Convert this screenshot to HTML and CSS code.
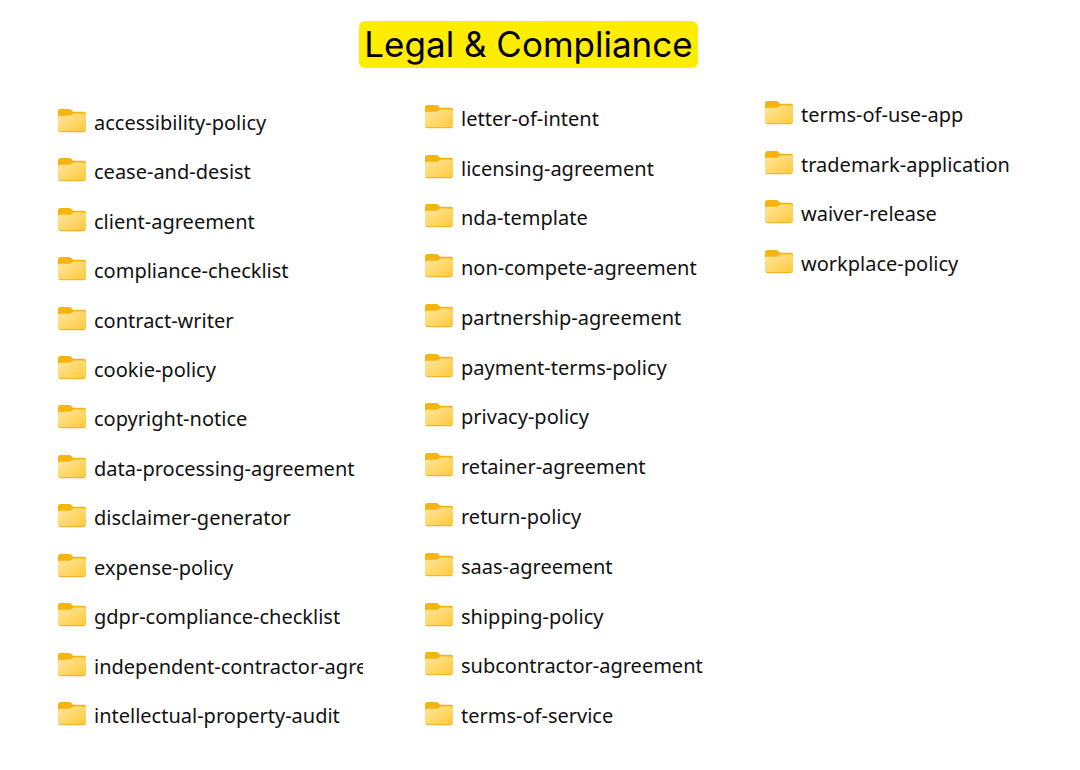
FILE: index.html
```html
<!DOCTYPE html>
<html lang="en">
<head>
<meta charset="utf-8">
<title>Legal &amp; Compliance</title>
<link rel="stylesheet" href="styles.css">
</head>
<body>
<svg class="defs" aria-hidden="true">
  <defs>
    <linearGradient id="front" x1="0" y1="0" x2="1" y2="1">
      <stop offset="0" stop-color="#ffe7a2"/>
      <stop offset="1" stop-color="#ffc937"/>
    </linearGradient>
    <symbol id="folder" viewBox="0 0 30 30">
      <path fill="#f6b40e" d="M1 3.500Q1 1 3.500 1H12Q13.500 1 14.500 2L16 3.800H27Q29 3.800 29 5.800V12H1Z"/>
      <path fill="url(#front)" d="M1 9.500Q1 7.800 3 7.800H12Q13.500 7.800 14.500 7L15.500 6Q16 5.500 17 5.500H27Q29 5.500 29 7.500V21.500Q29 24 26.500 24H3.500Q1 24 1 21.500Z"/>
      <path fill="#e9ae2e" d="M1.500 22.500Q2 24.200 4 24.200H26Q28 24.200 28.500 22.500Q27.500 23.200 26 23.200H4Q2.500 23.200 1.500 22.500Z"/>
    </symbol>
  </defs>
</svg>
<header class="header"><h1 class="title">Legal &amp; Compliance</h1></header>
<main class="columns">
  <ul class="list list-first">
    <li class="item"><svg class="icon"><use href="#folder"/></svg><span class="name">accessibility-policy</span></li>
    <li class="item"><svg class="icon"><use href="#folder"/></svg><span class="name">cease-and-desist</span></li>
    <li class="item"><svg class="icon"><use href="#folder"/></svg><span class="name">client-agreement</span></li>
    <li class="item"><svg class="icon"><use href="#folder"/></svg><span class="name">compliance-checklist</span></li>
    <li class="item"><svg class="icon"><use href="#folder"/></svg><span class="name">contract-writer</span></li>
    <li class="item"><svg class="icon"><use href="#folder"/></svg><span class="name">cookie-policy</span></li>
    <li class="item"><svg class="icon"><use href="#folder"/></svg><span class="name">copyright-notice</span></li>
    <li class="item"><svg class="icon"><use href="#folder"/></svg><span class="name">data-processing-agreement</span></li>
    <li class="item"><svg class="icon"><use href="#folder"/></svg><span class="name">disclaimer-generator</span></li>
    <li class="item"><svg class="icon"><use href="#folder"/></svg><span class="name">expense-policy</span></li>
    <li class="item"><svg class="icon"><use href="#folder"/></svg><span class="name">gdpr-compliance-checklist</span></li>
    <li class="item"><svg class="icon"><use href="#folder"/></svg><span class="name">independent-contractor-agre</span></li>
    <li class="item"><svg class="icon"><use href="#folder"/></svg><span class="name">intellectual-property-audit</span></li>
  </ul>
  <ul class="list list-second">
    <li class="item"><svg class="icon"><use href="#folder"/></svg><span class="name">letter-of-intent</span></li>
    <li class="item"><svg class="icon"><use href="#folder"/></svg><span class="name">licensing-agreement</span></li>
    <li class="item"><svg class="icon"><use href="#folder"/></svg><span class="name">nda-template</span></li>
    <li class="item"><svg class="icon"><use href="#folder"/></svg><span class="name">non-compete-agreement</span></li>
    <li class="item"><svg class="icon"><use href="#folder"/></svg><span class="name">partnership-agreement</span></li>
    <li class="item"><svg class="icon"><use href="#folder"/></svg><span class="name">payment-terms-policy</span></li>
    <li class="item"><svg class="icon"><use href="#folder"/></svg><span class="name">privacy-policy</span></li>
    <li class="item"><svg class="icon"><use href="#folder"/></svg><span class="name">retainer-agreement</span></li>
    <li class="item"><svg class="icon"><use href="#folder"/></svg><span class="name">return-policy</span></li>
    <li class="item"><svg class="icon"><use href="#folder"/></svg><span class="name">saas-agreement</span></li>
    <li class="item"><svg class="icon"><use href="#folder"/></svg><span class="name">shipping-policy</span></li>
    <li class="item"><svg class="icon"><use href="#folder"/></svg><span class="name">subcontractor-agreement</span></li>
    <li class="item"><svg class="icon"><use href="#folder"/></svg><span class="name">terms-of-service</span></li>
  </ul>
  <ul class="list list-third">
    <li class="item"><svg class="icon"><use href="#folder"/></svg><span class="name">terms-of-use-app</span></li>
    <li class="item"><svg class="icon"><use href="#folder"/></svg><span class="name">trademark-application</span></li>
    <li class="item"><svg class="icon"><use href="#folder"/></svg><span class="name">waiver-release</span></li>
    <li class="item"><svg class="icon"><use href="#folder"/></svg><span class="name">workplace-policy</span></li>
  </ul>
</main>
</body>
</html>
```
FILE: styles.css
```css
* { box-sizing: border-box; }
body { margin: 0; min-height: 100vh; display: flex; flex-direction: column; background: #fff; color: #111; font-family: "Noto Sans", "Open Sans", sans-serif; }
.defs { position: absolute; width: 0; height: 0; }
.header { display: flex; justify-content: center; padding: 21px 23px 0 0; }
.title { margin: 0; padding: 0 5px; border-radius: 6px; background: #ffed00; color: #000; font: 400 35px/47px Inter, sans-serif; }
.columns { flex: 1; display: grid; grid-template-columns: 306fr 279fr 259fr; column-gap: 61px; padding: 22px 57px 29px; }
.list { min-width: 0; margin: 0; padding: 0; list-style: none; display: grid; grid-template-rows: repeat(13, minmax(40px, 1fr)); }
.list-first { padding-top: 8px; }
.list-second { padding-top: 4px; }
.list-third { padding-bottom: 4px; }
.item { display: flex; align-items: center; gap: 7px; min-width: 0; overflow: hidden; }
.icon { flex: none; width: 30px; height: 30px; }
.name { font-size: 20px; line-height: 28px; white-space: nowrap; }
```
